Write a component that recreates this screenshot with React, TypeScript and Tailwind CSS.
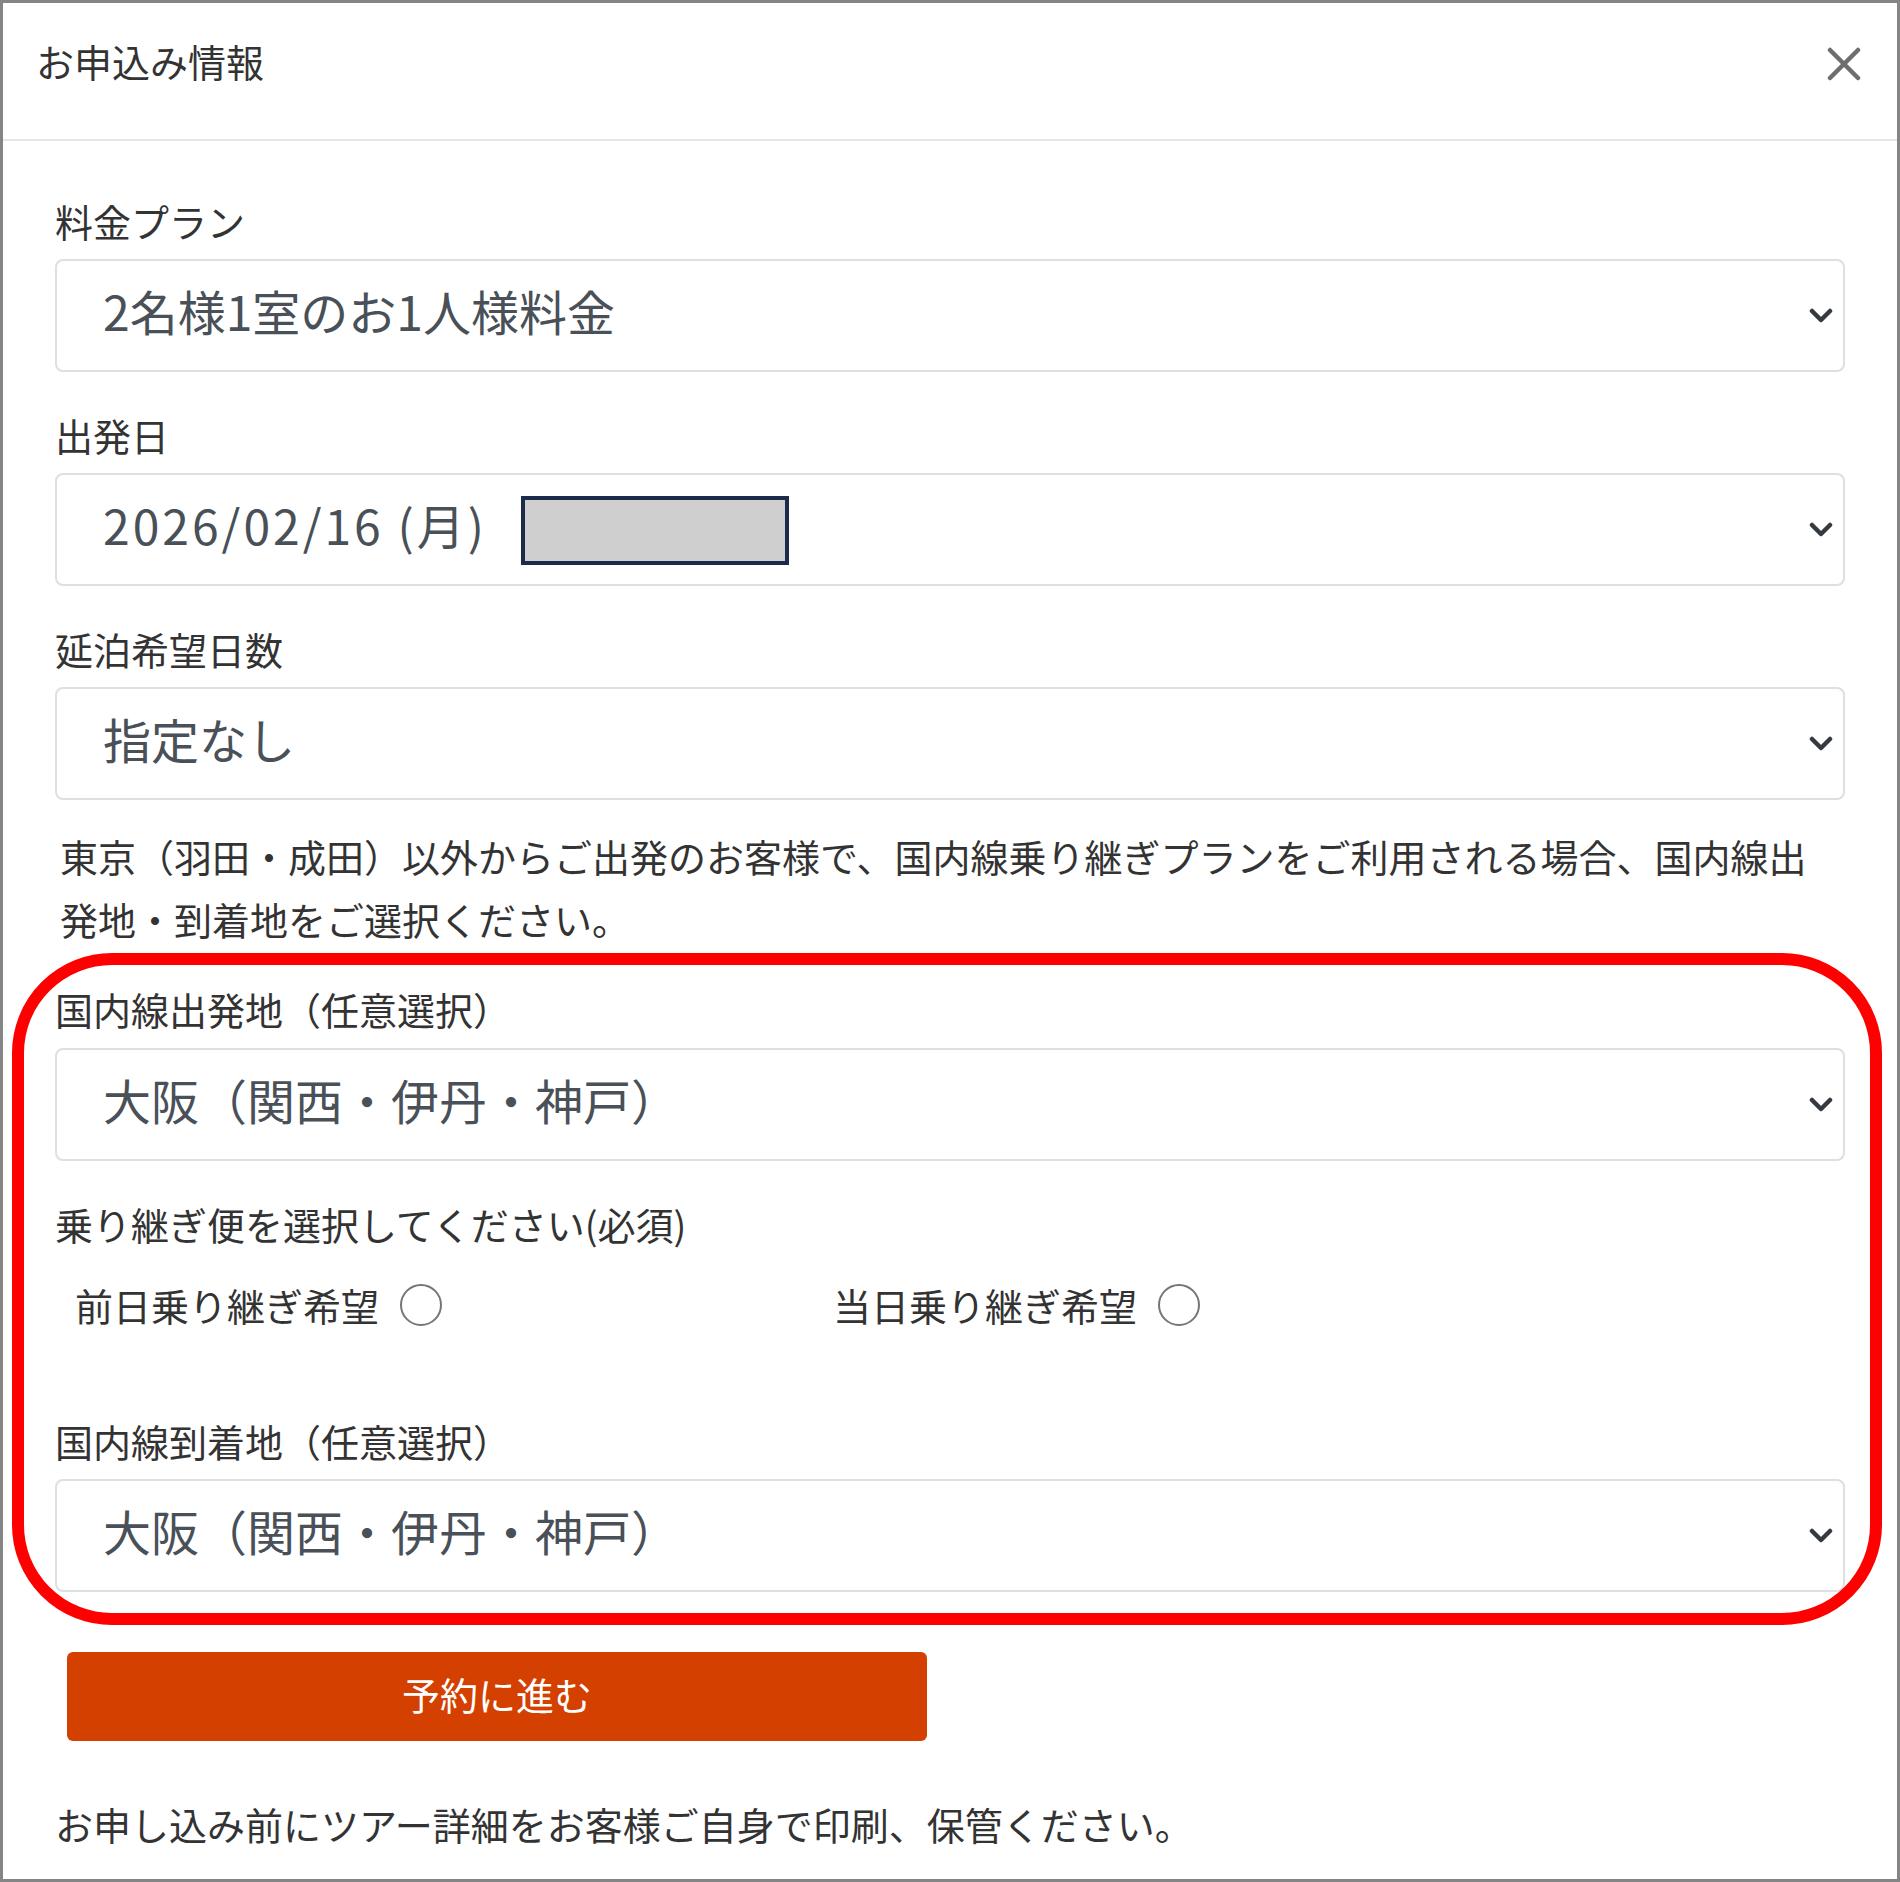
import type { ReactNode } from "react"

const FONT = { fontFamily: '"Noto Sans CJK JP", "Noto Sans", sans-serif' }

function Chevron() {
  return (
    <svg width="24" height="16" viewBox="0 0 24 16" className="shrink-0">
      <path
        d="M3 3 L12 12 L21 3"
        fill="none"
        stroke="#343a40"
        strokeWidth="4.5"
        strokeLinecap="round"
        strokeLinejoin="round"
      />
    </svg>
  )
}

function SelectBox({ children }: { children: ReactNode }) {
  return (
    <div className="flex h-[113px] items-center justify-between rounded-[8px] border-2 border-[#dcdfe3] bg-white pr-[10px] pl-[46px] text-[48px] leading-none text-[#495057]">
      <div className="flex items-center pb-[11px]">{children}</div>
      <Chevron />
    </div>
  )
}

function Label({ children, className = "" }: { children: ReactNode; className?: string }) {
  return <div className={`text-[38px] leading-[57px] text-[#333333] ${className}`}>{children}</div>
}

function Radio({ label, className = "" }: { label: string; className?: string }) {
  return (
    <label className={`flex items-center gap-[21px] ${className}`}>
      <span>{label}</span>
      <span className="inline-block h-[42px] w-[42px] rounded-full border-2 border-[#767676] bg-white" />
    </label>
  )
}

export default function App() {
  return (
    <div
      style={FONT}
      className="relative box-border h-[1882px] w-full overflow-hidden border-[3px] border-[#858585] bg-white"
    >
      <header className="flex h-[138px] items-start justify-between border-b-2 border-[#e3e6ea] pt-[29px] pr-[36px] pl-[33px]">
        <h1 className="text-[38px] leading-[57px] font-normal text-[#333333]">お申込み情報</h1>
        <button className="mt-[15px]" aria-label="閉じる">
          <svg width="34" height="34" viewBox="0 0 34 34">
            <path d="M3 3 L31 31 M31 3 L3 31" stroke="#6e6e6e" strokeWidth="4.5" strokeLinecap="round" />
          </svg>
        </button>
      </header>

      <div className="flex flex-col px-[52px] pt-[51px]">
        <Label>料金プラン</Label>
        <div className="mt-[10px]">
          <SelectBox>2名様1室のお1人様料金</SelectBox>
        </div>

        <Label className="mt-[34px]">出発日</Label>
        <div className="mt-[10px]">
          <SelectBox>
            <span className="tracking-[3px]">2026/02/16 (月)</span>
            <span className="mt-[12px] ml-[34px] inline-block h-[69px] w-[268px] border-[4px] border-[#1c2b4a] bg-[#cfcfcf]" />
          </SelectBox>
        </div>

        <Label className="mt-[34px]">延泊希望日数</Label>
        <div className="mt-[10px]">
          <SelectBox>指定なし</SelectBox>
        </div>

        <p className="mt-[24px] pr-[30px] pl-[5px] text-[38px] leading-[63px] text-[#333333]">
          東京（羽田・成田）以外からご出発のお客様で、国内線乗り継ぎプランをご利用される場合、国内線出
          <br />
          発地・到着地をご選択ください。
        </p>

        <Label className="mt-[30px]">国内線出発地（任意選択）</Label>
        <div className="mt-[11px]">
          <SelectBox>大阪（関西・伊丹・神戸）</SelectBox>
        </div>

        <Label className="mt-[34px]">乗り継ぎ便を選択してください(必須)</Label>
        <div className="mt-[24px] flex h-[57px] items-center pl-[20px] text-[38px] text-[#333333]">
          <Radio label="前日乗り継ぎ希望" className="w-[758px]" />
          <Radio label="当日乗り継ぎ希望" />
        </div>

        <Label className="mt-[79px]">国内線到着地（任意選択）</Label>
        <div className="mt-[10px]">
          <SelectBox>大阪（関西・伊丹・神戸）</SelectBox>
        </div>

        <button className="mt-[60px] ml-[12px] flex h-[89px] w-[860px] items-center justify-center rounded-[6px] bg-[#d44000] pb-[6px] text-[38px] text-white">
          予約に進む
        </button>

        <p className="mt-[54px] text-[38px] leading-[57px] text-[#333333]">
          お申し込み前にツアー詳細をお客様ご自身で印刷、保管ください。
        </p>
      </div>

      <div className="pointer-events-none absolute top-[950px] left-[9px] h-[672px] w-[1870px] rounded-[100px] border-[12px] border-[#ff0000]" />
    </div>
  )
}
